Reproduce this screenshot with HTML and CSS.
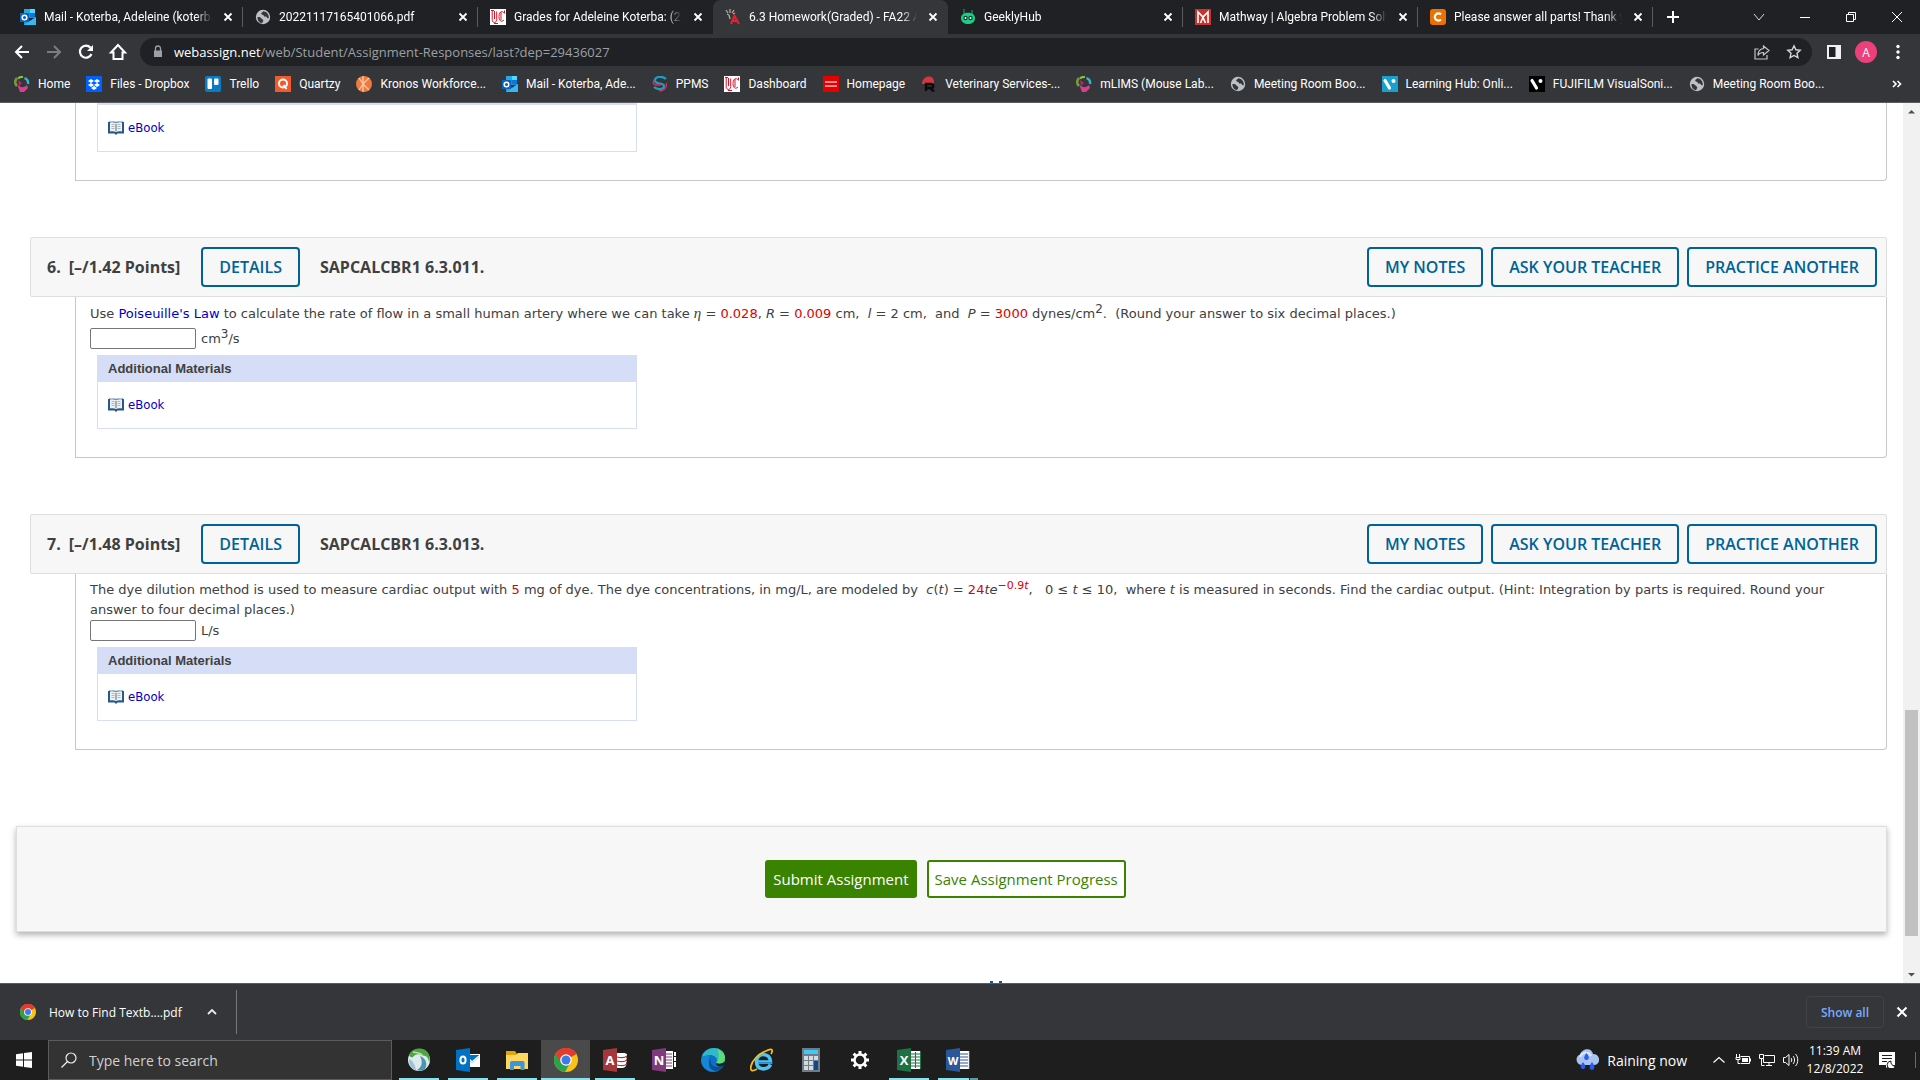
FILE: index.html
```html
<!DOCTYPE html>
<html lang="en">
<head>
  <meta charset="UTF-8">
  <title>6.3 Homework(Graded) - FA22</title>
  <link rel="stylesheet" href="styles.css">
</head>
<body>
  <!-- shared icons -->
  <svg class="sprite" aria-hidden="true">
    <symbol id="i-x" viewBox="0 0 16 16"><path d="M4.500 4.500l7 7M11.500 4.500l-7 7" stroke="currentColor" stroke-width="1.800" fill="none"/></symbol>
    <symbol id="i-outlook" viewBox="0 0 16 16">
      <path d="M4 0h11v9H4z" fill="#1490df"/><path d="M10 0h5v4h-5z" fill="#50d9ff"/><path d="M4 0h6v4H4z" fill="#28a8ea"/><path d="M10 4h5v4h-5z" fill="#0f78d4"/>
      <path d="M4 8l6 4 6-4v8H4z" fill="#1b9de2"/><path d="M4 16l12-8v8z" fill="#35b8f1"/>
      <path d="M0 4h9v9H0z" fill="#0a63b8"/><circle cx="4.500" cy="8.500" r="2.300" fill="none" stroke="#fff" stroke-width="1.500"/>
    </symbol>
    <symbol id="i-globe" viewBox="0 0 16 16">
      <circle cx="8" cy="8" r="7.200" fill="#bdc1c6"/>
      <path d="M2.500 8c1.800-.4 3.500.2 4 1.400s1.800.6 1.800 2-1 1.200-1.100 2.800c-3-.4-5-3-4.700-6.200zM8.200 2.300c-.6 1.400-2 1.200-2 2.400s2.200.6 2.600 2 3 .2 3.100 1.900c.1 1 1.300.8 1.900.4.3-3.500-2-6.300-5.600-6.700z" fill="#35363a"/>
    </symbol>
    <symbol id="i-uc" viewBox="0 0 16 16">
      <path d="M0 0h16v16H0z" fill="#fff"/>
      <path d="M1 1.500h3M2.200 1.500v9c0 4 4.500 4 4.500 0v-8M4.500 2v8M14 4c-2-3-5-1-5 3.500s2.500 6 5 3.500M11 3v8M4 14.500h4M14.500 1.500v3" stroke="#d5152a" fill="none"/>
    </symbol>
    <symbol id="i-swirl" viewBox="0 0 16 16">
      <path d="M4 2.500a6 6 0 0 1 5-1.500" stroke="#8dc63f" stroke-width="2" fill="none"/>
      <path d="M10.500 2c2.500 1 4 3.500 3.500 6" stroke="#35b7c4" stroke-width="2.400" fill="none"/>
      <path d="M3 2c-2.500 3-2 6 0 8" stroke="#6f9d3c" stroke-width="2.600" fill="none"/>
      <path d="M3 8c3 4 7 4 10 1l1 3-4 4H6z" fill="#d8408f"/><path d="M4 4l4 3-3 3z" fill="#b5286f"/>
    </symbol>
    <symbol id="i-chrome" viewBox="0 0 24 24">
      <circle cx="12" cy="12" r="12" fill="#fbc116"/>
      <path d="M12 12L1.600 6A12 12 0 0 1 22.400 6z" fill="#e33b2e"/>
      <path d="M12 12L1.600 6A12 12 0 0 0 11 24l5-9z" fill="#2ba24c"/>
      <path d="M12 6h10.400A12 12 0 0 0 1.600 6L7 15z" fill="#e33b2e"/>
      <circle cx="12" cy="12" r="5.800" fill="#fff"/><circle cx="12" cy="12" r="4.500" fill="#3a7cec"/>
    </symbol>
    <symbol id="i-book" viewBox="0 0 16 14">
      <path d="M0 1h16v11.500H9.500L8 14l-1.500-1.500H0z" fill="#24598a"/>
      <path d="M1 .5C4 0 6.500.3 8 1.300 9.500.3 12 0 15 .5" stroke="#8fb2cf" fill="none"/>
      <path d="M2 1.500c2-.5 4.500-.3 6 .7 1.500-1 4-1.200 6-.7v9c-2-.6-4.500-.5-6 .5-1.500-1-4-1.100-6-.5z" fill="#eef1f4"/>
      <path d="M3.500 3.500h3M3.500 5.500h3M3.500 7.500h3M9.500 3.500h3M9.500 5.500h3M9.500 7.500h3" stroke="#b4b8bd"/>
      <path d="M8 3v7" stroke="#666"/>
    </symbol>
    <symbol id="i-visual" viewBox="0 0 16 16">
      <path d="M0 0h16v16H0z" fill="currentColor"/>
      <path d="M3 4.500l4.500 7.500" stroke="#fff" stroke-width="3.200" stroke-linecap="round"/><circle cx="11.500" cy="5" r="2" fill="#fff"/>
    </symbol>
  </svg>

  <nav class="tabs">
    <div class="tab">
      <svg class="icon"><use href="#i-outlook"/></svg>
      <a class="tab-title" href="#">Mail - Koterba, Adeleine (koterbae)</a>
      <button class="tab-close" aria-label="Close tab"><svg class="icon"><use href="#i-x"/></svg></button>
    </div>
    <div class="tab">
      <svg class="icon"><use href="#i-globe"/></svg>
      <a class="tab-title" href="#">20221117165401066.pdf</a>
      <button class="tab-close" aria-label="Close tab"><svg class="icon"><use href="#i-x"/></svg></button>
    </div>
    <div class="tab no-line">
      <svg class="icon"><use href="#i-uc"/></svg>
      <a class="tab-title" href="#">Grades for Adeleine Koterba: (22FS)</a>
      <button class="tab-close" aria-label="Close tab"><svg class="icon"><use href="#i-x"/></svg></button>
    </div>
    <div class="tab active">
      <svg class="icon" viewBox="0 0 16 16">
        <path d="M1 1l2 3M5 0v4M9 1L7 4M2 5l2 1M8 5l2-1M4 6l1 4" stroke="#aaa" stroke-width="1.300" fill="none"/>
        <path d="M6 15l3.500-8L14 15M7.500 12h5" stroke="#e0222c" stroke-width="2.200" fill="none"/>
      </svg>
      <a class="tab-title" href="#">6.3 Homework(Graded) - FA22 Applied</a>
      <button class="tab-close" aria-label="Close tab"><svg class="icon"><use href="#i-x"/></svg></button>
    </div>
    <div class="tab">
      <svg class="icon" viewBox="0 0 16 16">
        <path d="M4 0v5M12 1v4" stroke="#0c9a60" stroke-width="1.200"/><path d="M1 9c0-7 14-7 14 0 0 8-14 8-14 0z" fill="#1bcf86"/>
        <circle cx="5.500" cy="9" r="2.200" fill="#0b3b2b"/><circle cx="10.500" cy="9" r="2.200" fill="#0b3b2b"/><circle cx="5.500" cy="9" r="1" fill="#fff"/><circle cx="10.500" cy="9" r="1" fill="#fff"/>
      </svg>
      <a class="tab-title" href="#">GeeklyHub</a>
      <button class="tab-close" aria-label="Close tab"><svg class="icon"><use href="#i-x"/></svg></button>
    </div>
    <div class="tab">
      <svg class="icon" viewBox="0 0 16 16">
        <path d="M0 0h16v16H0z" fill="#c8332f"/><path d="M3 14V3l5 5 5-5v11M5.500 14L8 8.500l2.500 5.500" stroke="#fff" stroke-width="1.600" fill="none"/>
      </svg>
      <a class="tab-title" href="#">Mathway | Algebra Problem Solver</a>
      <button class="tab-close" aria-label="Close tab"><svg class="icon"><use href="#i-x"/></svg></button>
    </div>
    <div class="tab">
      <svg class="icon" viewBox="0 0 16 16">
        <rect width="16" height="16" rx="3" fill="#eb7100"/><path d="M11 5.500a3.600 3.600 0 1 0 0 5" stroke="#fff" stroke-width="2.200" fill="none"/>
      </svg>
      <a class="tab-title" href="#">Please answer all parts! Thank you</a>
      <button class="tab-close" aria-label="Close tab"><svg class="icon"><use href="#i-x"/></svg></button>
    </div>
    <button class="new-tab" aria-label="New tab"><svg class="icon" viewBox="0 0 16 16"><path d="M8 2v12M2 8h12" stroke="#fff" stroke-width="2"/></svg></button>
    <div class="window-buttons">
      <button aria-label="Search tabs"><svg class="icon" viewBox="0 0 16 16"><path d="M3 5l5 6 5-6" stroke="#ddd" fill="none"/></svg></button>
      <button aria-label="Minimize"><svg class="icon" viewBox="0 0 16 16"><path d="M3 8.500h10" stroke="#fff"/></svg></button>
      <button aria-label="Restore"><svg class="icon" viewBox="0 0 16 16"><path d="M3.500 5.500h7v7h-7zM5.500 5.500v-2h7v7h-2" stroke="#fff" fill="none"/></svg></button>
      <button aria-label="Close"><svg class="icon" viewBox="0 0 16 16"><path d="M3 3l10 10M13 3L3 13" stroke="#fff" fill="none"/></svg></button>
    </div>
  </nav>

  <div class="toolbar">
    <button aria-label="Back"><svg viewBox="0 0 20 20"><path d="M17 10H4M10 4l-6 6 6 6" stroke="#fff" stroke-width="2" fill="none"/></svg></button>
    <button aria-label="Forward"><svg viewBox="0 0 20 20"><path d="M3 10h13M10 4l6 6-6 6" stroke="#7c7d80" stroke-width="2" fill="none"/></svg></button>
    <button aria-label="Reload"><svg viewBox="0 0 20 20"><path d="M15.500 12a6 6 0 1 1-1-6.200" stroke="#fff" stroke-width="2.200" fill="none"/><path d="M17 3v6h-6z" fill="#fff"/></svg></button>
    <button aria-label="Home"><svg viewBox="0 0 20 20"><path d="M10 3l-7 7.500h2.500V17h9v-6.500H17z" stroke="#fff" stroke-width="2" fill="none"/></svg></button>
    <form class="omnibox">
      <svg class="icon" viewBox="0 0 16 16"><path d="M4 6.500h8V13H4z" fill="#9aa0a6"/><path d="M5.500 7V4.500a2.500 2.500 0 0 1 5 0V7" stroke="#9aa0a6" stroke-width="1.300" fill="none"/></svg>
      <label for="url">webassign.net</label>
      <input id="url" type="text" value="/web/Student/Assignment-Responses/last?dep=29436027">
      <button type="button" aria-label="Share"><svg class="icon" viewBox="0 0 16 16"><path d="M4.500 5H1v10h12v-4M9.500 2L15 6.500 9.500 11V8.500c-3 0-4.500 1-5.500 3 0-4 2-6.500 5.500-7z" stroke="#c3c5c8" stroke-width="1.200" fill="none"/></svg></button>
      <button type="button" aria-label="Bookmark"><svg class="icon" viewBox="0 0 16 16"><path d="M8 1.800l1.900 4 4.300.5-3.200 3 .9 4.400L8 11.500l-3.900 2.200.9-4.400-3.200-3 4.300-.5z" stroke="#d5d7da" stroke-width="1.400" fill="none"/></svg></button>
    </form>
    <button aria-label="Side panel"><svg viewBox="0 0 20 20"><path d="M3 3h14v14H3z" fill="#f1f1f1"/><path d="M5 5h6.500v10H5z" fill="#202124"/></svg></button>
    <button class="avatar" aria-label="Profile">A</button>
    <button aria-label="Menu"><svg viewBox="0 0 20 20"><circle cx="10" cy="4.500" r="1.700" fill="#fff"/><circle cx="10" cy="10" r="1.700" fill="#fff"/><circle cx="10" cy="15.500" r="1.700" fill="#fff"/></svg></button>
  </div>

  <nav class="bookmarks">
    <a href="#"><svg class="icon"><use href="#i-swirl"/></svg>Home</a>
    <a href="#"><svg class="icon" viewBox="0 0 16 16"><path d="M0 0h16v16H0z" fill="#0061fe"/><path d="M5 3l3 2-3 2-3-2zM11 3l3 2-3 2-3-2zM5 7l3 2-3 2-3-2zM11 7l3 2-3 2-3-2zM8 10l3 2-3 2-3-2z" fill="#fff"/></svg>Files - Dropbox</a>
    <a href="#"><svg class="icon" viewBox="0 0 16 16"><rect width="16" height="16" rx="2" fill="#0b7bc6"/><rect x="2.500" y="2.500" width="4.500" height="10.500" rx="1" fill="#fff"/><rect x="9" y="2.500" width="4.500" height="6.500" rx="1" fill="#fff"/></svg>Trello</a>
    <a href="#"><svg class="icon" viewBox="0 0 16 16"><path d="M0 0h16v16H0z" fill="#f15a2b"/><circle cx="8" cy="7.500" r="4" stroke="#fff" stroke-width="2" fill="none"/><path d="M8.500 9l3 4" stroke="#fff" stroke-width="2"/></svg>Quartzy</a>
    <a href="#"><svg class="icon" viewBox="0 0 16 16"><circle cx="8" cy="8" r="8" fill="#f0793f"/><path d="M7 0v16M7 8l6-6M7 8l6 6M3 2l4 6-4 6" stroke="#ffc9a3" stroke-width="1.300" fill="none"/></svg>Kronos Workforce...</a>
    <a href="#"><svg class="icon"><use href="#i-outlook"/></svg>Mail - Koterba, Ade...</a>
    <a href="#"><svg class="icon" viewBox="0 0 16 16"><path d="M14 3C9-1 2 1 3 5s9 1 9 5-7 4-10 1" stroke="#16a0cf" stroke-width="2.200" fill="none"/><path d="M2 4c-3 6 4 5 7 5M14 7c2 5-3 8-7 8" stroke="#d8304f" stroke-width="1.400" fill="none"/></svg>PPMS</a>
    <a href="#"><svg class="icon"><use href="#i-uc"/></svg>Dashboard</a>
    <a href="#"><svg class="icon" viewBox="0 0 16 16"><path d="M0 0h16v16H0z" fill="#e60000"/><path d="M2 6h12M2 10h12" stroke="#fbb" stroke-width="1.300"/></svg>Homepage</a>
    <a href="#"><svg class="icon" viewBox="0 0 16 16"><path d="M1 8c0-9 12-10 12-2v2z" fill="#d3373f"/><path d="M5 15V8h5c3 0 3 4 0 4H5M9 12l4 3.500" stroke="#0b0b0b" stroke-width="2.400" fill="none"/></svg>Veterinary Services-...</a>
    <a href="#"><svg class="icon"><use href="#i-swirl"/></svg>mLIMS (Mouse Lab...</a>
    <a href="#"><svg class="icon"><use href="#i-globe"/></svg>Meeting Room Boo...</a>
    <a href="#"><svg class="icon visual-blue"><use href="#i-visual"/></svg>Learning Hub: Onli...</a>
    <a href="#"><svg class="icon visual-black"><use href="#i-visual"/></svg>FUJIFILM VisualSoni...</a>
    <a href="#"><svg class="icon"><use href="#i-globe"/></svg>Meeting Room Boo...</a>
    <button class="more" aria-label="More bookmarks"><svg class="icon" viewBox="0 0 16 16"><path d="M4 5l3 3-3 3M8.500 5l3 3-3 3" stroke="#fff" stroke-width="1.600" fill="none"/></svg></button>
  </nav>

  <div class="viewport">
    <main>
      <section class="question">
        <div class="question-body">
          <div class="materials cut">
            <p><svg class="book"><use href="#i-book"/></svg><a href="#">eBook</a></p>
          </div>
        </div>
      </section>

      <section class="question">
        <header class="question-header">
          <span class="number">6.</span>
          <span class="points">[–/1.42 Points]</span>
          <button class="btn-outline">DETAILS</button>
          <h2>SAPCALCBR1 6.3.011.</h2>
          <button class="btn-outline">MY NOTES</button>
          <button class="btn-outline">ASK YOUR TEACHER</button>
          <button class="btn-outline">PRACTICE ANOTHER</button>
        </header>
        <div class="question-body">
          <p>Use <a href="#">Poiseuille's Law</a> to calculate the rate of flow in a small human artery where we can take <i class="eta">η</i> = <span class="red">0.028</span>, <i>R</i> = <span class="red">0.009</span> cm,&nbsp; <i>l</i> = 2 cm,&nbsp; and&nbsp; <i>P</i> = <span class="red">3000</span> dynes/cm<sup>2</sup>.&nbsp; (Round your answer to six decimal places.)</p>
          <div class="answer tall">
            <input type="text" id="answer6"><label for="answer6">cm<sup>3</sup>/s</label>
          </div>
          <div class="materials">
            <h3>Additional Materials</h3>
            <p><svg class="book"><use href="#i-book"/></svg><a href="#">eBook</a></p>
          </div>
        </div>
      </section>

      <section class="question">
        <header class="question-header">
          <span class="number">7.</span>
          <span class="points">[–/1.48 Points]</span>
          <button class="btn-outline">DETAILS</button>
          <h2>SAPCALCBR1 6.3.013.</h2>
          <button class="btn-outline">MY NOTES</button>
          <button class="btn-outline">ASK YOUR TEACHER</button>
          <button class="btn-outline">PRACTICE ANOTHER</button>
        </header>
        <div class="question-body">
          <p>The dye dilution method is used to measure cardiac output with <span class="red">5</span> mg of dye. The dye concentrations, in mg/L, are modeled by&nbsp; <i>c</i>(<i>t</i>) = <span class="red">24</span><i>te</i><sup class="red">−0.9<i>t</i></sup>,&nbsp;&nbsp; 0 ≤ <i>t</i> ≤ 10,&nbsp; where <i>t</i> is measured in seconds. Find the cardiac output. (Hint: Integration by parts is required. Round your answer to four decimal places.)</p>
          <div class="answer">
            <input type="text" id="answer7"><label for="answer7">L/s</label>
          </div>
          <div class="materials">
            <h3>Additional Materials</h3>
            <p><svg class="book"><use href="#i-book"/></svg><a href="#">eBook</a></p>
          </div>
        </div>
      </section>

      <div class="submit-panel">
        <button class="btn-submit">Submit Assignment</button>
        <button class="btn-save">Save Assignment Progress</button>
      </div>
      <svg class="page-mark" viewBox="0 0 14 2"><path d="M1 0h3v2H1zM10 0h3v2h-3z" fill="#006298"/></svg>
    </main>
    <div class="scrollbar">
      <svg viewBox="0 0 17 17"><path d="M5 10.500h7L8.500 7z" fill="#505050"/></svg>
      <div class="scroll-before"></div>
      <div class="scroll-thumb"></div>
      <div class="scroll-after"></div>
      <svg viewBox="0 0 17 17"><path d="M5 7h7l-3.500 3.500z" fill="#505050"/></svg>
    </div>
  </div>

  <div class="downloads">
    <a class="download" href="#"><svg class="icon"><use href="#i-chrome"/></svg>How to Find Textb....pdf</a>
    <button class="download-menu" aria-label="Download options"><svg class="icon" viewBox="0 0 16 16"><path d="M4 10l4-4 4 4" stroke="#e8eaed" stroke-width="1.800" fill="none"/></svg></button>
    <button class="show-all">Show all</button>
    <button class="close-shelf" aria-label="Close"><svg class="icon" viewBox="0 0 16 16"><path d="M3.500 3.500l9 9M12.500 3.500l-9 9" stroke="#fff" stroke-width="2"/></svg></button>
  </div>

  <footer class="taskbar">
    <button class="start" aria-label="Start"><svg class="icon" viewBox="0 0 16 16"><path d="M0 2.200L7 1.200v6.300H0zM8 1l8-1v7.500H8zM0 8.500h7v6.300l-7-1zM8 8.500h8V16l-8-1z" fill="#fff"/></svg></button>
    <div class="search">
      <svg class="icon" viewBox="0 0 16 16"><circle cx="10" cy="6" r="5" stroke="#eee" stroke-width="1.200" fill="none"/><path d="M6.500 9.500L.5 15.500" stroke="#eee" stroke-width="1.300"/></svg>
      <input type="text" aria-label="Search" placeholder="Type here to search">
    </div>
    <div class="apps">
      <button class="app open" aria-label="AnyConnect"><svg viewBox="0 0 24 24"><circle cx="12" cy="12" r="11" fill="#dfeaf0"/><path d="M2 7C5-1 19-2 22 7c1 3 1 5 0 7-1-5-3-7-6-6-4-3-8-2-10 1-1 1-3 0-4-2z" fill="#4ca83e"/><path d="M6 4c3 1 7 0 10 4" stroke="#b9dfae" stroke-width="1.500" fill="none"/><path d="M13 8c6 2 8 8 5 13-3 2-6 2-8 1 5-3 6-8 3-14z" fill="#4b95ad"/><path d="M2 11c3 1 6 5 7 11-5-1-7-6-7-11z" fill="#9ac4d0"/></svg></button>
      <button class="app open" aria-label="Outlook"><svg viewBox="0 0 24 24"><path d="M10 6h14v13H10z" fill="#fff"/><path d="M11 7h12v2l-7 6-5-4z" fill="#0072c6"/><path d="M12 10l4 4 7-6" stroke="#fff" stroke-width="1.500" fill="none"/><path d="M0 2l14-2v24L0 22z" fill="#0072c6"/><ellipse cx="7" cy="12" rx="2.600" ry="3.500" stroke="#fff" stroke-width="2" fill="none"/></svg></button>
      <button class="app open" aria-label="File Explorer"><svg viewBox="0 0 24 24"><path d="M1 3h9l2 3h11v5H1z" fill="#e5a50a"/><path d="M1 7h10l2-2h10v16H1z" fill="#ffd75e"/><path d="M5 22v-7c0-1 .5-2 2-2h11c1 0 1.500 1 1.500 2v7h-4v-4H9v4z" fill="#3a96dd"/></svg></button>
      <button class="app open current" aria-label="Chrome"><svg><use href="#i-chrome"/></svg></button>
      <button class="app open" aria-label="Access"><svg viewBox="0 0 24 24"><path d="M13 5h7c5 0 5 3 3 4 1 1 1 2 0 3 1 1 1 2 0 3 1 3-1 5-4 5h-6z" fill="#fff"/><path d="M14 9c4 1 8 1 10-1M14 13c4 1 8 1 10-1M14 17c4 1 8 1 10-1" stroke="#a4373a" stroke-width="1.200" fill="none"/><path d="M0 2l14-2v24L0 22z" fill="#a4373a"/><text x="7" y="17" class="letter">A</text></svg></button>
      <button class="app" aria-label="OneNote"><svg viewBox="0 0 24 24"><path d="M13 3h8v18h-8zM22 4h2v4h-2zM22 9h2v4h-2zM22 14h2v5h-2z" fill="#fff"/><path d="M14 6h6M14 9h6M14 12h6M14 15h6M14 18h6" stroke="#80397b"/><path d="M0 2l14-2v24L0 22z" fill="#80397b"/><text x="7" y="17" class="letter">N</text></svg></button>
      <button class="app" aria-label="Edge"><svg viewBox="0 0 24 24"><circle cx="12" cy="12" r="12" fill="#0f6fc5"/><path d="M1 9C4-3 24-3 24 10c0 5-5 7-9 5 3-4-1-8-6-8-3 0-6 1-8 2z" fill="#2fb9c9"/><path d="M16 1c5 2 8 5 8 9 0 5-5 7-9 5 3-2 4-8 1-14z" fill="#5fdc72"/><path d="M9 7C5 13 9 22 18 22A12 12 0 0 1 0 12c1-4 6-5 9-5z" fill="#1488d8"/><path d="M10 11c-2 6 4 10 12 7-2 3-5 5-8 5-6-1-8-8-4-12z" fill="#0b4f93"/><path d="M15 15c3 1 6 1 8-1l1 2-2 2c-4 1-7 0-7-3z" fill="#1e1e1e"/></svg></button>
      <button class="app" aria-label="Internet Explorer"><svg viewBox="0 0 24 24"><path d="M20.500 16.500c-2.500 6-14 6.500-14-3s14-9.500 14 0.500H8" stroke="#4cc5f5" stroke-width="3.600" fill="none"/><path d="M8 14.500h14" stroke="#1d92d8" stroke-width="1.200"/><path d="M21 6c3-5 0-6-5-3C8 6 2 13 1 18s1 6 6 3" stroke="#f5bd19" stroke-width="1.800" fill="none"/></svg></button>
      <button class="app" aria-label="Calculator"><svg viewBox="0 0 24 24"><path d="M3 0h18v24H3z" fill="#6f7c87"/><path d="M5 2h14v4H5z" fill="#42c8f4"/><path d="M5 8h4v4H5zM10 8h4v4h-4zM15 8h4v4h-4zM5 13h4v4H5zM10 13h4v4h-4zM5 18h4v4H5zM10 18h4v4h-4z" fill="#d5dadf"/><path d="M15 13h4v9h-4z" fill="#0e4a8a"/></svg></button>
      <button class="app" aria-label="Settings"><svg viewBox="0 0 24 24"><circle cx="12" cy="12" r="5.500" stroke="#fff" stroke-width="2.500" fill="none"/><path d="M12 3v3M12 18v3M3 12h3M18 12h3M5.600 5.600l2.200 2.200M16.200 16.200l2.200 2.200M5.600 18.400l2.200-2.200M16.200 7.800l2.200-2.200" stroke="#fff" stroke-width="3"/></svg></button>
      <button class="app open" aria-label="Excel"><svg viewBox="0 0 24 24"><path d="M13 3h11v18H13z" fill="#fff"/><path d="M14 6h9M14 9h9M14 12h9M14 15h9M14 18h9M18.500 4v16M23.500 3v18" stroke="#1e7145"/><path d="M0 2l14-2v24L0 22z" fill="#1e7145"/><text x="7" y="17" class="letter">X</text></svg></button>
      <button class="app open stacked" aria-label="Word"><svg viewBox="0 0 24 24"><path d="M13 3h11v18H13z" fill="#fff"/><path d="M14 6h8M14 9h8M14 12h8M14 15h8M14 18h8M23.500 3v18" stroke="#2b579a" stroke-width="1.200"/><path d="M0 2l14-2v24L0 22z" fill="#2b579a"/><text x="7" y="17" class="letter small">W</text></svg></button>
    </div>
    <a class="weather" href="#">
      <svg viewBox="0 0 24 24"><path d="M6 17a5.500 5.500 0 0 1-1-10.500C7 0 17-1 18 6c8 0 8 11 1 11z" fill="#a9c4ee"/><path d="M5 9c2-5 9-6 11-1" stroke="#dce8fb" stroke-width="2" fill="none"/><path d="M11.500 5c4 5 2 7 0 7s-4-2 0-7zM8 14c4 5 2 7 0 7s-4-2 0-7zM17 14c4 5 2 8 0 8s-4-3 0-8z" fill="#2b5cf0"/></svg>
      Raining now
    </a>
    <div class="tray">
      <button aria-label="Hidden icons"><svg viewBox="0 0 16 16"><path d="M2.500 10.500L8 5.500l5.500 5" stroke="#fff" stroke-width="1.200" fill="none"/></svg></button>
      <button aria-label="Battery"><svg viewBox="0 0 16 16"><path d="M5.500 4.500h9v7h-9M15.500 6.500v3M1.500 2v3M4.500 2v3M1 5.500h4v2H1zM3 8v3.500h2" stroke="#fff" fill="none"/><path d="M7 6h6v4H7z" fill="#fff"/></svg></button>
      <button aria-label="Network"><svg viewBox="0 0 16 16"><path d="M5.500 3.500h10v7h-11v-4M7 13.500h6M10 11v2.500M.5 2.500h4v4h-4zM2.500 6.500v7h3" stroke="#fff" fill="none"/></svg></button>
      <button aria-label="Volume"><svg viewBox="0 0 16 16"><path d="M.5 5.500h2L6 2.500v11l-3.500-3h-2zM8 6c1 1 1 3 0 4M10 4c2 2 2 6 0 8M12.500 2c3 3 3 9 0 12" stroke="#fff" fill="none"/></svg></button>
    </div>
    <div class="clock"><span>11:39 AM</span><span>12/8/2022</span></div>
    <button class="notifications" aria-label="Notifications"><svg class="icon" viewBox="0 0 16 16"><path d="M0 0h16v13h-6l-3 3v-3H0z" fill="#fff"/><path d="M3 3.500h10M3 6.500h10M3 9.500h5" stroke="#1e1e1e"/><path d="M12 9a4 4 0 1 0 4 5 4 4 0 0 1-4-5z" fill="#fff" stroke="#1e1e1e"/></svg></button>
  </footer>
</body>
</html>
```
FILE: styles.css
```css
:root {
  --chrome-dark: #202124;
  --chrome-bar: #35363a;
  --blue: #006298;
  --green: #398300;
  --text: #404040;
}

* {
  box-sizing: border-box;
}

body {
  display: flex;
  flex-direction: column;
  height: 100vh;
  margin: 0;
  overflow: hidden;
  background: #fff;
  font-family: 'Open Sans', 'Noto Sans', sans-serif;
  font-size: 12px;
}

button {
  padding: 0;
  border: none;
  background: none;
  font: inherit;
  color: inherit;
}

a {
  text-decoration: none;
}

svg {
  display: block;
  flex: none;
}

.sprite {
  position: absolute;
  width: 0;
  height: 0;
}

.icon {
  width: 16px;
  height: 16px;
}

/* Tab strip */
.tabs {
  display: flex;
  align-items: center;
  height: 34px;
  padding-left: 8px;
  background: var(--chrome-dark);
  font-family: Roboto, sans-serif;
  color: #fff;
}

.tab {
  display: flex;
  align-items: center;
  gap: 8px;
  flex: 0 1 235px;
  min-width: 0;
  height: 34px;
  padding: 0 7px 0 12px;
  background: linear-gradient(#5a5b5e, #5a5b5e) right center / 1px 20px no-repeat;
}

.tab.no-line {
  background: none;
}

.tab.active {
  border-radius: 8px 8px 0 0;
  background: var(--chrome-bar);
}

.tab-title {
  flex: 1;
  overflow: hidden;
  white-space: nowrap;
  color: #fff;
  mask-image: linear-gradient(90deg, #000 calc(100% - 16px), transparent);
}

.new-tab {
  margin-left: 12px;
}

.window-buttons {
  display: flex;
  height: 28px;
  margin-left: auto;
}

.window-buttons button {
  display: flex;
  align-items: center;
  justify-content: center;
  width: 46px;
}

/* Address bar */
.toolbar {
  display: flex;
  align-items: center;
  gap: 12px;
  height: 32px;
  padding: 4px 12px 0;
  background: var(--chrome-bar);
}

.toolbar > button {
  width: 20px;
  height: 20px;
}

.omnibox {
  display: flex;
  align-items: center;
  flex: 1;
  height: 28px;
  padding: 0 10px;
  border-radius: 14px;
  background: var(--chrome-dark);
  font-size: 13px;
}

.omnibox label {
  margin-left: 8px;
  color: #fff;
}

.omnibox input {
  flex: 1;
  padding: 0;
  border: none;
  background: none;
  font: inherit;
  color: #9aa0a6;
}

.omnibox button {
  margin-left: 16px;
}

.toolbar > .avatar {
  width: 22px;
  height: 22px;
  margin: 0 -1px;
  border-radius: 50%;
  background: #ec407a;
  color: #fff;
}

.bookmarks {
  display: flex;
  align-items: center;
  gap: 16px;
  height: 37px;
  padding: 0 15px 0 14px;
  border-bottom: 1px solid #5b5c5f;
  background: var(--chrome-bar);
  font-family: Roboto, sans-serif;
}

.bookmarks a {
  display: flex;
  align-items: center;
  gap: 8px;
  white-space: nowrap;
  color: #fff;
}

.bookmarks .more {
  margin-left: auto;
}

.visual-blue {
  color: #18a0cf;
}

.visual-black {
  color: #000;
}

/* Assignment page */
.viewport {
  display: flex;
  flex: 1;
  min-height: 0;
}

main {
  flex: 1;
  padding: 0 16px;
  overflow: hidden;
  font-family: Verdana, 'DejaVu Sans', sans-serif;
  font-size: 13px;
  line-height: 20px;
  color: var(--text);
}

main a {
  color: #0000cc;
}

main p {
  margin: 0;
}

.question {
  margin: 0 0 56px 14px;
}

.question-header {
  display: flex;
  align-items: center;
  gap: 8px;
  height: 60px;
  padding: 0 9px 0 16px;
  border: 1px solid #dedede;
  border-radius: 2px;
  background: #f7f7f7;
  font-family: 'Open Sans', sans-serif;
  font-size: 16px;
}

.number,
.points,
.question-header h2 {
  font-size: 16px;
  font-weight: 700;
}

.points {
  margin-right: 13px;
}

.question-header h2 {
  flex: 1;
  margin: 0 0 0 12px;
}

.btn-outline {
  height: 40px;
  padding: 0 16px;
  border: 2px solid var(--blue);
  border-radius: 4px;
  font-weight: 600;
  color: var(--blue);
}

.question-body {
  margin-left: 45px;
  padding: 6px 14px 28px;
  border: 1px solid #c8c8c8;
  border-top: none;
  border-radius: 0 0 4px 0;
}

.question:first-child .question-body {
  padding-top: 0;
}

.question-body sup {
  font-size: 12px;
  line-height: 0;
}

.question-body sup.red {
  font-size: 11px;
}

.eta {
  font-family: 'Liberation Serif', serif;
  font-size: 15px;
}

.red {
  color: #dd0000;
}

.answer {
  display: flex;
  align-items: center;
  gap: 5px;
}

.answer.tall {
  margin-top: 4px;
}

.answer input {
  width: 106px;
  height: 21px;
  padding: 1px 2px;
  border: 1px solid #767676;
  border-radius: 2px;
  font: inherit;
}

.materials {
  max-width: 540px;
  margin: 6px 0 0 7px;
  border: 1px solid #d6ddf7;
  font-family: 'Liberation Sans', Arial, sans-serif;
}

.materials.cut {
  margin-top: 0;
  border-top-width: 2px;
}

.materials h3 {
  margin: 0;
  padding: 3px 10px;
  background: #d6ddf7;
  font-size: 13px;
}

.materials p {
  display: flex;
  align-items: center;
  gap: 4px;
  padding: 13px 10px;
  font-family: 'DejaVu Sans Condensed', 'Liberation Sans', sans-serif;
}

.book {
  width: 16px;
  height: 14px;
}

.submit-panel {
  display: flex;
  align-items: center;
  justify-content: center;
  gap: 10px;
  height: 106px;
  margin-top: 76px;
  padding-right: 12px;
  border: 1px solid #dedede;
  background: #f7f7f7;
  box-shadow: 0 3px 6px rgba(0, 0, 0, 0.3);
  font-family: 'Open Sans', sans-serif;
  font-size: 15px;
}

.btn-submit,
.btn-save {
  height: 38px;
  padding: 0 6px;
  border: 2px solid var(--green);
  border-radius: 3px;
}

.btn-submit {
  background: var(--green);
  color: #fff;
}

.btn-save {
  background: #fff;
  color: var(--green);
}

.page-mark {
  width: 14px;
  height: 2px;
  margin: 49px auto 0 52%;
}

.scrollbar {
  display: flex;
  flex-direction: column;
  width: 17px;
  background: #f1f1f1;
}

.scrollbar svg {
  width: 17px;
  height: 17px;
}

.scroll-before {
  flex: 590;
}

.scroll-thumb {
  flex: 226;
  margin: 0 2px;
  background: #c1c1c1;
}

.scroll-after {
  flex: 30;
}

/* Download shelf */
.downloads {
  display: flex;
  align-items: center;
  height: 57px;
  padding: 0 10px 0 20px;
  border-top: 1px solid #5b5c5f;
  background: var(--chrome-bar);
}

.download {
  display: flex;
  align-items: center;
  gap: 13px;
  color: #fff;
}

.download-menu {
  height: 44px;
  margin-left: 22px;
  padding-right: 16px;
  border-right: 1px solid #77787b;
}

.show-all {
  width: 78px;
  height: 32px;
  margin: 0 10px 0 auto;
  border: 1px solid #424347;
  border-radius: 4px;
  font-weight: 600;
  color: #7baaf7;
}

/* Taskbar */
.taskbar {
  display: flex;
  align-items: center;
  height: 40px;
  background: #1e1e1e;
  color: #fff;
}

.start {
  display: flex;
  justify-content: center;
  width: 48px;
}

.search {
  display: flex;
  align-items: center;
  gap: 12px;
  width: 344px;
  height: 40px;
  padding: 0 12px;
  border: 1px solid #5c5c5c;
  background: #333;
}

.search input {
  flex: 1;
  padding: 0;
  border: none;
  background: none;
  font: 14px 'Open Sans', sans-serif;
}

.search input::placeholder {
  color: #d0d0d0;
}

.apps {
  display: flex;
  flex: 1;
  padding-left: 2px;
}

.app {
  display: flex;
  align-items: center;
  justify-content: center;
  width: 49px;
  height: 40px;
}

.app svg {
  width: 24px;
  height: 24px;
}

.app.open {
  background: linear-gradient(#84e3ec, #84e3ec) center bottom / 40px 2px no-repeat;
}

.app.current {
  background: linear-gradient(#84e3ec, #84e3ec) center bottom / 100% 2px no-repeat #4a4a4a;
}

.app.stacked {
  background-image: linear-gradient(90deg, #84e3ec 31px, #1e1e1e 31px, #1e1e1e 32px, #5b9ca3 32px);
}

.letter {
  font: bold 13px 'Open Sans', sans-serif;
  text-anchor: middle;
  fill: #fff;
}

.letter.small {
  font-size: 11px;
}

.weather {
  display: flex;
  align-items: center;
  gap: 8px;
  margin-right: 24px;
  font-size: 14px;
  color: #fff;
}

.weather svg {
  width: 24px;
  height: 24px;
}

.tray {
  display: flex;
  gap: 8px;
}

.tray svg {
  width: 16px;
  height: 16px;
}

.clock {
  display: flex;
  flex-direction: column;
  align-items: center;
  width: 72px;
  line-height: 18px;
}

.notifications {
  margin: 0 4px 0 8px;
  padding-right: 20px;
  border-right: 1px solid #6a6a6a;
}
```
